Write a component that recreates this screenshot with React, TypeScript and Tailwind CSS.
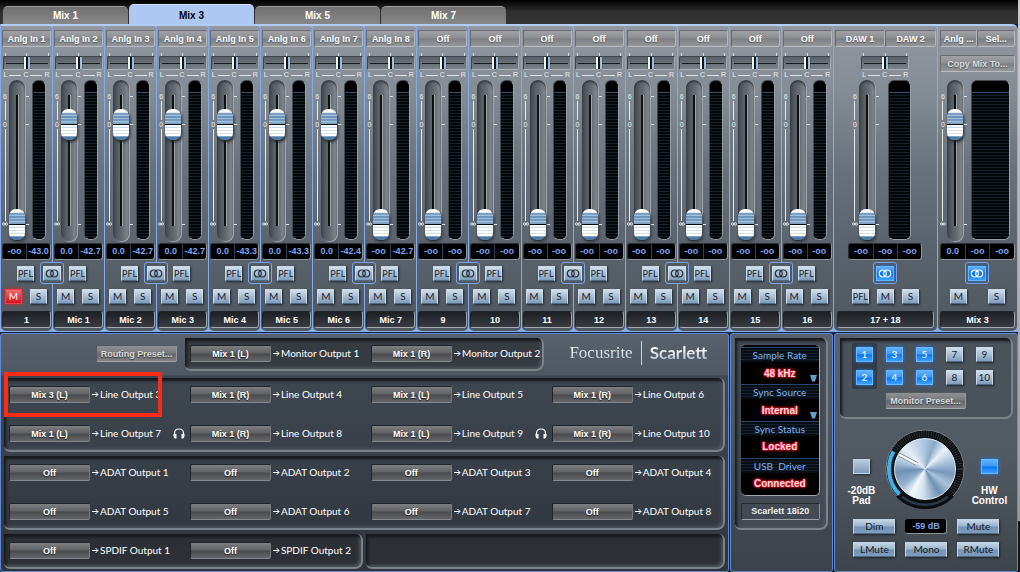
import { useState } from 'react';

type Strip = {
  source: string;
  name: string;
  level: number;
  readouts: string[];
  muted?: boolean;
};

const UP = 101;
const DOWN = 1;

const strips: Strip[] = [
  { source: 'Anlg In 1', name: '1', level: DOWN, readouts: ['-oo', '-43.0'], muted: true },
  { source: 'Anlg In 2', name: 'Mic 1', level: UP, readouts: ['0.0', '-42.7'] },
  { source: 'Anlg In 3', name: 'Mic 2', level: UP, readouts: ['0.0', '-42.7'] },
  { source: 'Anlg In 4', name: 'Mic 3', level: UP, readouts: ['0.0', '-42.7'] },
  { source: 'Anlg In 5', name: 'Mic 4', level: UP, readouts: ['0.0', '-43.3'] },
  { source: 'Anlg In 6', name: 'Mic 5', level: UP, readouts: ['0.0', '-43.3'] },
  { source: 'Anlg In 7', name: 'Mic 6', level: UP, readouts: ['0.0', '-42.4'] },
  { source: 'Anlg In 8', name: 'Mic 7', level: DOWN, readouts: ['-oo', '-42.7'] },
  ...['9', '10', '11', '12', '13', '14', '15', '16'].map((name) => ({
    source: 'Off',
    name,
    level: DOWN,
    readouts: ['-oo', '-oo'],
  })),
];

const SourceButton = ({ label, dim = false }: { label: string; dim?: boolean }) => (
  <button
    className={`h-[17px] min-w-0 flex-1 overflow-hidden whitespace-nowrap rounded-[2px] border border-t-[#686b70] border-l-[#686b70] border-r-[#b4b6b9] border-b-[#b9bbbe] bg-[linear-gradient(#a0a2a5,#8b8d91_48%,#7b7e82_52%,#95979b)] text-center text-[9px] leading-[16px] font-bold [text-shadow:0_1px_1px_#55585c] ${dim ? 'text-[#d6d8da]' : 'text-white'}`}
  >
    {label}
  </button>
);

const RouteButton = ({ label }: { label: string }) => (
  <button className="h-[17px] w-[81px] shrink-0 rounded-[2px] border border-t-[#20252b] border-l-[#20252b] border-r-[#777b81] border-b-[#858a90] bg-[linear-gradient(#7e7f81,#5e6063_48%,#484a4d_52%,#636568)] text-center text-[9px] leading-[17px] font-bold text-white [text-shadow:0_1px_1px_#222]">
    {label}
  </button>
);

const PresetButton = ({ label }: { label: string }) => (
  <button className="h-[17px] w-[81px] rounded-[2px] border border-t-[#55585c] border-l-[#55585c] border-r-[#95989c] border-b-[#a5a8ab] bg-[linear-gradient(#8e9093,#77797c_48%,#65676a_52%,#808285)] text-center text-[9px] leading-[16px] font-bold whitespace-nowrap text-[#dcdddf] [text-shadow:0_1px_1px_#333]">
    {label}
  </button>
);

const SmallButton = ({ label, tone = 'plain' }: { label: string; tone?: 'plain' | 'mute' | 'lit' }) => {
  const tones = {
    plain: 'border-[#cbd9e8] border-b-[#52677e] bg-[linear-gradient(#d0deeb,#7f9dbc)] text-[#1b232c] shadow-[1px_1px_2px_#20262c]',
    mute: 'border-[#f0404c] bg-[linear-gradient(#f46a70,#d3121e)] text-white shadow-[0_0_4px_#e2202e]',
    lit: 'border-[#69b6ff] bg-[linear-gradient(#5fb2ff,#3c96f5_48%,#0a74ee_52%,#3aa2ff)] text-white shadow-[0_0_4px_#1f7be4]',
  };
  return (
    <button
      className={`flex h-[15px] w-[17px] shrink-0 items-center justify-center border font-[Lato,sans-serif] leading-[13px] ${label.length > 2 ? 'text-[9px]' : 'text-[10px]'} ${tones[tone]}`}
    >
      {label}
    </button>
  );
};

const LinkButton = ({ lit = false }: { lit?: boolean }) => (
  <div className="flex h-[22px] w-6 items-center justify-center rounded-[3px] border border-[#7ea6ec] bg-[#505962]">
    <button
      aria-label="Link channels"
      className={`flex h-[15px] w-[18px] items-center justify-center border ${lit ? 'border-[#69b6ff] bg-[linear-gradient(#5fb2ff,#0a74ee_52%,#3aa2ff)] shadow-[0_0_4px_#1f7be4]' : 'border-[#cbd9e8] border-b-[#52677e] bg-[linear-gradient(#d0deeb,#7f9dbc)]'}`}
    >
      <svg viewBox="0 0 14 9" className={`h-[9px] w-[14px] shrink-0 ${lit ? 'stroke-white' : 'stroke-[#26303a]'}`} fill="none" strokeWidth="1.2">
        <circle cx="4.8" cy="4.5" r="3.5" />
        <circle cx="9.2" cy="4.5" r="3.5" />
      </svg>
    </button>
  </div>
);

const Pan = ({ label }: { label: string }) => (
  <div className="w-[48px]">
    <div className="flex h-1 items-end justify-between px-[2px]">
      <i className="h-[3px] w-px bg-[#d5d9dd]" />
      <i className="h-[3px] w-px bg-[#d5d9dd]" />
      <i className="h-[3px] w-px bg-[#d5d9dd]" />
    </div>
    <input
      type="range"
      aria-label={label}
      defaultValue={50}
      className="block h-[14px] w-full appearance-none rounded-[2px] border border-t-[#3e444b] border-l-[#3e444b] border-r-[#a4a9ae] border-b-[#aeb3b7] [background:linear-gradient(#15181b,#15181b)_center/42px_1px_no-repeat,linear-gradient(#5a6067,#7a8188)] [&::-webkit-slider-thumb]:h-3 [&::-webkit-slider-thumb]:w-[6px] [&::-webkit-slider-thumb]:appearance-none [&::-webkit-slider-thumb]:bg-[linear-gradient(90deg,#f4f8fb_0_2px,#101418_2px_4px,#9cc0df_4px)] [&::-webkit-slider-thumb]:shadow-[0_0_1px_#222]"
    />
    <div className="mt-px flex h-2 items-center gap-[2px] px-px text-[7px] leading-[8px] text-[#eef0f2]">
      <span>L</span>
      <i className="h-px flex-1 bg-[#dfe3e6]" />
      <span>C</span>
      <i className="h-px flex-1 bg-[#dfe3e6]" />
      <span>R</span>
    </div>
  </div>
);

const FaderScale = () => (
  <div className="flex w-[7px] flex-col items-center pt-[13px] pr-px text-[7px] leading-[7px] text-[#eef0f2]">
    <span>6</span>
    <i className="mt-px mb-px h-[19px] w-px bg-[#e6e9eb]" />
    <span>0</span>
    <i className="mt-px mb-px h-[92px] w-px bg-[#e6e9eb]" />
    <svg viewBox="0 0 6 4" className="h-1 w-[6px] shrink-0" fill="none" stroke="#eef0f2" strokeWidth="0.9">
      <circle cx="1.7" cy="2" r="1.2" />
      <circle cx="4.3" cy="2" r="1.2" />
    </svg>
  </div>
);

const Fader = ({ level, label }: { level: number; label: string }) => (
  <>
    <FaderScale />
    <input
      type="range"
      aria-label={label}
      min={0}
      max={130}
      defaultValue={level}
      className="h-[161px] w-4 appearance-none rounded-full [direction:rtl] [writing-mode:vertical-lr] [background:linear-gradient(90deg,#0d0f11_2px,#a2a7ac_2px)_7px_15px/3px_131px_no-repeat,linear-gradient(90deg,#3d4349,#565d65_30%,#656c74_60%,#878d93)] shadow-[inset_0_2px_2px_#363b41,1px_1px_0_#a1a6ab] [&::-webkit-slider-thumb]:h-[31px] [&::-webkit-slider-thumb]:w-4 [&::-webkit-slider-thumb]:appearance-none [&::-webkit-slider-thumb]:rounded-[7px] [&::-webkit-slider-thumb]:bg-[linear-gradient(#fff_0_3px,#dfeaf3_3px_4px,#7ba0c3_4px_6px,#a6c3dc_6px_7px,#6d94b9_7px_9px,#9dbcd8_9px_10px,#7198bc_10px_12px,#a9c5dd_12px_13px,#7fa4c6_13px_15px,#08090a_15px_16px,#f6f9fb_16px_18px,#c9d9e7_18px_19px,#fff_19px_21px,#cddce9_21px_22px,#fff_22px_24px,#d6e2ec_24px_25px,#fff_25px_27px,#7fa5c6_27px_28px,#4e7ba5_28px)] [&::-webkit-slider-thumb]:shadow-[1px_2px_3px_#1d2227]"
    />
    <div className="ml-px flex w-[3px] flex-col pt-4">
      <i className="h-px w-full bg-[#e2e5e8]" />
      <i className="mt-[27px] h-px w-full bg-[#e2e5e8]" />
      <i className="mt-[99px] h-px w-full bg-[#e2e5e8]" />
    </div>
  </>
);

const Meter = ({ className }: { className: string }) => (
  <div className={`h-[160px] overflow-hidden rounded-[6px] border border-t-[#44494f] border-l-[#44494f] border-r-[#979da3] border-b-[#979da3] bg-black pt-[11px] ${className}`}>
    <div className="h-full border-t border-[#2c4d6d] bg-[repeating-linear-gradient(#04070a_0_2px,#14202b_2px_3px)]" />
  </div>
);

const Readouts = ({ values, className = '' }: { values: string[]; className?: string }) => (
  <div className={`flex h-[17px] divide-x divide-[#27405f] rounded-[3px] border border-t-[#2b3036] border-l-[#2b3036] border-r-[#8d9298] border-b-[#8d9298] bg-black text-[9px] leading-[14px] font-bold text-[#7fa5f2] ${className}`}>
    {values.map((v, i) => (
      <span key={i} className="min-w-0 flex-1 text-center whitespace-nowrap">{v}</span>
    ))}
  </div>
);

const NameBox = ({ name }: { name: string }) => (
  <div className="mx-px mt-[7px] h-[17px] rounded-[3px] border border-t-[#20242a] border-l-[#20242a] border-r-[#9da2a7] border-b-[#a6abb0] bg-[linear-gradient(#1d2025,#383c42)] text-center text-[9px] leading-[16px] font-bold text-white">
    {name}
  </div>
);

const stripClass =
  'relative flex min-w-0 flex-col rounded-tr-[4px] rounded-b-[5px] bg-[linear-gradient(#9297a0_0%,#858d96_20%,#68717b_48%,#59626c_75%,#4f575f_100%)] pt-1 pb-[3px]';

const ChannelStrip = ({ strip, linked }: { strip: Strip; linked: boolean }) => (
  <section className={stripClass}>
    <div className="mx-px flex"><SourceButton label={strip.source} /></div>
    <div className="mt-[5px] flex justify-center"><Pan label={`Pan ${strip.name}`} /></div>
    <div className="mt-px flex pl-px">
      <Fader level={strip.level} label={`Level ${strip.name}`} />
      <Meter className="ml-[3px] w-[14px]" />
    </div>
    <Readouts values={strip.readouts} className="mx-px mt-[2px]" />
    <div className="mt-[2px] flex h-[22px] items-center pl-4">
      <SmallButton label="PFL" />
      {linked && (
        <div className="absolute -right-3 z-10"><LinkButton /></div>
      )}
    </div>
    <div className="mt-[5px] flex gap-2 pl-1">
      <SmallButton label="M" tone={strip.muted ? 'mute' : 'plain'} />
      <SmallButton label="S" />
    </div>
    <NameBox name={strip.name} />
  </section>
);

const DawStrip = () => (
  <section className={stripClass}>
    <div className="mx-px flex">
      <SourceButton label="DAW 1" />
      <SourceButton label="DAW 2" />
    </div>
    <div className="mt-[5px] flex justify-center"><Pan label="Pan 17 + 18" /></div>
    <div className="mt-px flex justify-center pr-2">
      <Fader level={DOWN} label="Level 17 + 18" />
      <Meter className="ml-[9px] w-[23px]" />
    </div>
    <Readouts values={['-oo', '-oo', '-oo']} className="mx-auto mt-[2px] w-[74px]" />
    <div className="mt-[2px] flex justify-center"><LinkButton lit /></div>
    <div className="mt-[5px] flex justify-center gap-2">
      <SmallButton label="PFL" />
      <SmallButton label="M" />
      <SmallButton label="S" />
    </div>
    <div className="px-[2px]"><NameBox name="17 + 18" /></div>
  </section>
);

const MixStrip = () => (
  <section className={stripClass}>
    <div className="mx-[2px] flex">
      <SourceButton label="Anlg ..." />
      <SourceButton label="Sel..." />
    </div>
    <div className="mx-[2px] mt-2 flex"><SourceButton label="Copy Mix To..." dim /></div>
    <div className="mt-[8px] flex pl-[2px]">
      <Fader level={UP} label="Level Mix 3" />
      <Meter className="ml-1 w-[39px]" />
    </div>
    <Readouts values={['0.0', '-oo', '-oo']} className="mx-[2px] mt-[2px]" />
    <div className="mt-[2px] flex justify-center"><LinkButton lit /></div>
    <div className="mt-[5px] flex justify-center gap-[21px]">
      <SmallButton label="M" />
      <SmallButton label="S" />
    </div>
    <div className="px-px"><NameBox name="Mix 3" /></div>
  </section>
);

const Route = ({ source, output, phones = false }: { source: string; output: string; phones?: boolean }) => (
  <div className="flex h-[17px] items-center">
    <RouteButton label={source} />
    <svg viewBox="0 0 7 7" className="mr-px ml-[2px] h-[7px] w-[7px] shrink-0" fill="none" stroke="#fff" strokeWidth="1">
      <path d="M0 3.5h6M3.5 1l2.5 2.5L3.5 6" />
    </svg>
    <span className="font-[Lato,sans-serif] text-[10px] leading-[15px] whitespace-nowrap text-white">{output}</span>
    {phones && (
      <svg viewBox="0 0 12 11" className="mr-[5px] ml-auto h-[11px] w-3 shrink-0">
        <path d="M1.5 7V5.5C1.5 2.8 3.4 1 6 1s4.500 1.800 4.500 4.500V7" fill="none" stroke="#fff" strokeWidth="1.200" />
        <path d="M.5 6h3v4.500h-1.500C1 10 .5 8.500.5 7.500zM11.500 6h-3v4.500H10c1-.5 1.500-2 1.500-3z" fill="#fff" />
      </svg>
    )}
  </div>
);

const wellClass =
  'rounded-br-[8px] rounded-bl-[6px] rounded-tr-[6px] border-r-2 border-b-2 border-[#7c8289] shadow-[inset_2px_3px_3px_#15181c,inset_-2px_-2px_3px_#4d535b]';

const routeGrid = 'grid grid-cols-[181fr_181fr_181fr_171fr] gap-y-[22px] pt-2 pb-[8px] pl-[5px]';

const Routing = () => (
  <section className="rounded-[3px] border border-[#6189d2] bg-[linear-gradient(#59626c,#4f5862_41px,#3e4650_42px,#39404a_50%,#2f343b)] px-[3px] pb-[2px]">
    <div className="flex items-start pt-[4px]">
      <div className="flex w-[181px] shrink-0 justify-end pt-[7px] pr-2"><PresetButton label="Routing Preset..." /></div>
      <div className={`flex w-[359px] shrink-0 bg-[#363b42] pt-[7px] pb-[7px] pl-[5px] ${wellClass}`}>
        <div className="w-[181px] shrink-0"><Route source="Mix 1 (L)" output="Monitor Output 1" /></div>
        <Route source="Mix 1 (R)" output="Monitor Output 2" />
      </div>
      <div className="flex flex-1 items-center justify-center gap-2 pt-[3px] pl-2">
        <span className="bg-[linear-gradient(#fff_30%,#8aa9c6)] bg-clip-text font-[Liberation_Serif,serif] text-[17px] leading-6 text-transparent">Focusrite</span>
        <i className="h-6 w-px bg-[#c4d5e4]" />
        <span className="bg-[linear-gradient(#fff_35%,#7f9fbe)] bg-clip-text font-[Lato,sans-serif] text-[17px] leading-6 font-bold text-transparent">Scarlett</span>
      </div>
    </div>
    <div className={`relative mt-[7px] ${routeGrid} ${wellClass}`}>
      <Route source="Mix 3 (L)" output="Line Output 3" />
      <Route source="Mix 1 (R)" output="Line Output 4" />
      <Route source="Mix 1 (L)" output="Line Output 5" />
      <Route source="Mix 1 (R)" output="Line Output 6" />
      <Route source="Mix 1 (L)" output="Line Output 7" phones />
      <Route source="Mix 1 (R)" output="Line Output 8" />
      <Route source="Mix 1 (L)" output="Line Output 9" phones />
      <Route source="Mix 1 (R)" output="Line Output 10" />
      <div className="pointer-events-none absolute -top-[6px] left-0 h-[45px] w-[158px] border-4 border-[#fd2a16]" />
    </div>
    <div className={`mt-[4px] ${routeGrid} ${wellClass}`}>
      {[1, 2, 3, 4, 5, 6, 7, 8].map((n) => (
        <Route key={n} source="Off" output={`ADAT Output ${n}`} />
      ))}
    </div>
    <div className="mt-[4px] grid grid-cols-2 gap-[3px]">
      <div className={`grid grid-cols-[181fr_171fr] bg-[#2c3036] pt-2 pb-2 pl-[5px] ${wellClass}`}>
        <Route source="Off" output="SPDIF Output 1" />
        <Route source="Off" output="SPDIF Output 2" />
      </div>
      <div className={`bg-[#2c3036] ${wellClass}`} />
    </div>
  </section>
);

const valueClass =
  'h-[22px] w-full text-center text-[10px] leading-[21px] font-bold text-[#ffdfe1] [text-shadow:0_0_2px_#f0182a,0_0_2px_#f0182a,0_0_3px_#f0182a,0_0_3px_#f0182a]';

const StatusRow = ({ title, value, menu = false }: { title: string; value: string; menu?: boolean }) => (
  <label className="relative block h-[37px]">
    <span className="block h-[15px] border-t border-[#26456b] bg-[repeating-linear-gradient(#080d13_0_2px,#152130_2px_3px)] text-center font-[Lato,sans-serif] text-[10px] leading-[14px] whitespace-pre text-[#7db4f5]">
      {title}
    </span>
    {menu ? (
      <>
        <select className={`block appearance-none bg-transparent [text-align-last:center] ${valueClass}`}>
          <option>{value}</option>
        </select>
        <svg viewBox="0 0 7 7" className="pointer-events-none absolute right-[2px] bottom-[2px] h-[7px] w-[7px]">
          <path d="M0 0h7L5 6.500H2z" fill="#5f9fca" />
        </svg>
      </>
    ) : (
      <output className={`block ${valueClass}`}>{value}</output>
    )}
  </label>
);

const Status = () => (
  <section className="rounded-[3px] border border-[#6189d2] bg-[linear-gradient(#59626c,#454c55_60%,#3c424a)] px-1 pt-[4px]">
    <div className={`bg-[#434a53] px-[6px] pt-[7px] pb-2 ${wellClass}`}>
      <div className="overflow-hidden rounded-[5px] border-r border-b border-[#a2a8ae] bg-black pt-[2px]">
        <StatusRow title="Sample Rate" value="48 kHz" menu />
        <StatusRow title="Sync Source" value="Internal" menu />
        <StatusRow title="Sync Status" value="Locked" />
        <StatusRow title="USB  Driver" value="Connected" />
      </div>
      <div className="mt-[7px] h-[17px] rounded-[2px] border border-t-[#23282d] border-l-[#23282d] border-r-[#8d9298] border-b-[#9da2a7] text-center text-[9px] leading-[15px] font-bold whitespace-nowrap text-[#eceeef]">
        Scarlett 18i20
      </div>
    </div>
  </section>
);

// 270 degree dial, ticks fan out from lower left to lower right
const Knob = () => (
  <div className="relative h-20 w-20">
    <svg viewBox="-40 -40 80 80" className="h-full w-full">
      <circle r="39" fill="#0a0c0e" stroke="#757c84" strokeWidth="1" />
      <circle r="35" fill="none" stroke="#2c3238" strokeWidth="6" strokeDasharray="1 1.4" />
      <path d="M-26 25A36 36 0 0 0 26 25" fill="none" stroke="#0a0c0e" strokeWidth="8" />
      <path d="M-23 27.500A36 36 0 0 0 23 27.500" fill="none" stroke="#27394a" strokeWidth="2.500" />
      <path d="M-25.500 25.500A36 36 0 0 1-31.500-17.500" fill="none" stroke="#3fb0e8" strokeWidth="4" />
    </svg>
    <div className="absolute inset-[9px] rounded-full border border-[#e4edf5] [background:conic-gradient(#a9c3dc,#8aabc9_20deg,#e9f1f8_45deg,#a5c0d9_75deg,#7898b8_100deg,#a9c3db_125deg,#6f90b1_150deg,#d5e3ef_185deg,#f2f7fb_210deg,#92b1cd_235deg,#6e90b2_265deg,#b7cde1_290deg,#e6eff7_315deg,#a9c3dc)]" />
    <svg viewBox="-40 -40 80 80" className="absolute inset-0 h-full w-full">
      <path d="M-26-14.500L-8-5" stroke="#7c8f9f" strokeWidth="4" />
      <path d="M-26-14.500L-8-5" stroke="#fff" strokeWidth="2.500" />
    </svg>
    <input type="range" aria-label="Monitor level" defaultValue={28} className="absolute inset-0 h-full w-full opacity-0" />
  </div>
);

const WideButton = ({ label }: { label: string }) => (
  <button className="h-[15px] border border-[#c4d4e5] border-b-[#52677e] bg-[linear-gradient(#c6d6e6,#9bb5cf_45%,#7694b5_55%,#7d9dbf)] text-center font-[Lato,sans-serif] text-[10px] leading-[13px] text-[#151c24] shadow-[1px_1px_2px_#20262c]">
    {label}
  </button>
);

const Monitor = () => (
  <section className="rounded-[3px] border border-[#6189d2] bg-[linear-gradient(#59626c,#515a63_50%,#3e444c)] pr-1 pl-[5px] pt-[4px] pb-[13px]">
    <div className={`bg-[#4a525b] pb-[8px] pl-3 pt-[5px] ${wellClass}`}>
      <div className="flex gap-[5px]">
        {[[1, 2], [3, 4], [5, 6], [7, 8], [9, 10]].map((pair) => (
          <div key={pair[0]} className={`flex flex-col gap-2 rounded-[2px] px-[4px] py-1 ${pair[0] === 1 ? 'bg-[#343a42]' : ''}`}>
            {pair.map((n) => (
              <SmallButton key={n} label={String(n)} tone={n < 7 ? 'lit' : 'plain'} />
            ))}
          </div>
        ))}
      </div>
      <div className="mt-[3px] flex justify-center pr-3"><PresetButton label="Monitor Preset..." /></div>
    </div>
    <div className="flex items-start justify-center gap-[6px] pt-[10px] pr-[2px] text-center text-[10px] leading-[10px] font-bold text-white">
      <label className="flex w-9 flex-col items-center gap-3 pt-[30px]">
        <input type="checkbox" className="h-[15px] w-[17px] appearance-none border border-[#c4d4e5] bg-[linear-gradient(#b9cbdc,#7f9cba)] shadow-[1px_1px_2px_#20262c]" />
        <span>-20dB<br />Pad</span>
      </label>
      <Knob />
      <label className="flex w-9 flex-col items-center gap-3 pt-[30px]">
        <input type="checkbox" defaultChecked className="h-[15px] w-[17px] appearance-none border border-[#69b6ff] bg-[linear-gradient(#5fb2ff,#3c96f5_48%,#0a74ee_52%,#3aa2ff)] shadow-[0_0_4px_#1f7be4]" />
        <span>HW<br />Control</span>
      </label>
    </div>
    <div className="mx-auto mt-[10px] grid w-[146px] grid-cols-3 gap-x-[10px] gap-y-2">
      <WideButton label="Dim" />
      <output className="h-[15px] rounded-[3px] border-r border-b border-[#8d9298] bg-black text-center text-[9px] leading-[15px] font-bold text-[#7fa5f2]">-59 dB</output>
      <WideButton label="Mute" />
      <WideButton label="LMute" />
      <WideButton label="Mono" />
      <WideButton label="RMute" />
    </div>
  </section>
);

export default function App() {
  const [mix, setMix] = useState('Mix 3');

  return (
    <div className="flex bg-[#16233c] font-[Liberation_Sans,Arial,sans-serif]">
      <main className="min-w-0 flex-1">
        <nav className="flex h-6 items-end gap-px bg-[linear-gradient(#000,#2f2f2f_50%,#353535)] pl-[3px]">
          {['Mix 1', 'Mix 3', 'Mix 5', 'Mix 7'].map((name) => (
            <button
              key={name}
              onClick={() => setMix(name)}
              className={`w-[125px] rounded-t-[5px] border-t text-center text-[10px] font-bold ${
                mix === name
                  ? 'h-5 border-[#d2e1fa] bg-[#adc8f3] pt-px leading-[20px] text-black'
                  : 'h-[18px] border-[#9b9b9b] bg-[linear-gradient(#707070,#888)] leading-[18px] text-white'
              }`}
            >
              {name}
            </button>
          ))}
        </nav>
        <div className="grid grid-cols-[repeat(16,minmax(0,51fr))_103fr_79fr] gap-px rounded-tr-[6px] border-t-2 border-r border-b border-l border-[#84abee] border-t-[#b4cdf5] bg-[#84abee]">
          {strips.map((strip, i) => (
            <ChannelStrip key={strip.name} strip={strip} linked={i % 2 === 0} />
          ))}
          <DawStrip />
          <MixStrip />
        </div>
        <div className="mt-px grid grid-cols-[728fr_103fr_184fr] gap-px">
          <Routing />
          <Status />
          <Monitor />
        </div>
      </main>
      <div className="w-[2px] bg-[linear-gradient(#c9c9c9,#9a9a9a_91%,#151515_91%)]" />
    </div>
  );
}
